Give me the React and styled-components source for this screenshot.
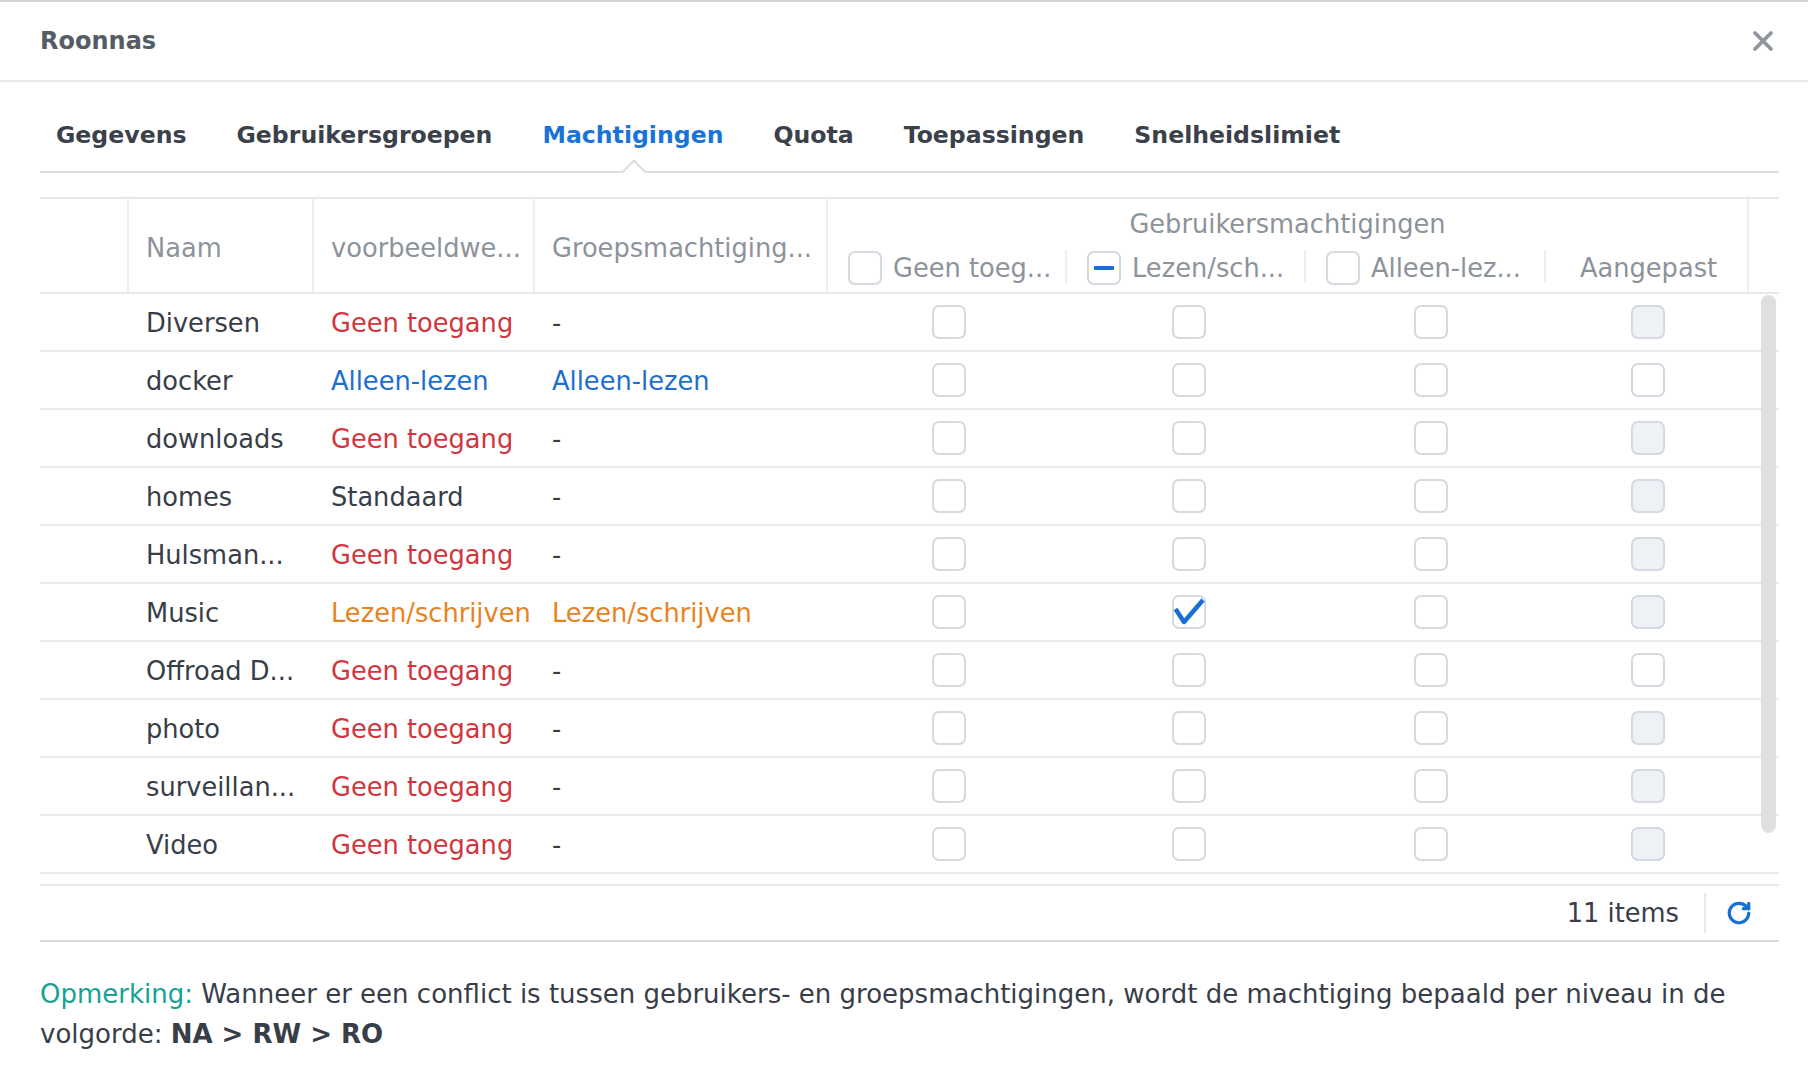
import React from 'react';
import styled, { createGlobalStyle } from 'styled-components';
import { RotateCw } from 'lucide-react';

const GlobalStyle = createGlobalStyle`
  * { box-sizing: border-box; }
  body {
    margin: 0;
    background: #fff;
    font-family: "DejaVu Sans", Verdana, sans-serif;
    color: #383e48;
  }
`

const COLS = '89px 185px 221px 293px 239px 239px 240px 201px 32px';

const TopEdge = styled.div`
  height: 2px;
  background: #d4d4d4;
`

const Header = styled.div`
  height: 80px;
  display: flex;
  align-items: center;
  justify-content: space-between;
  padding: 0 34px 0 40px;
  border-bottom: 2px solid #e6e9ec;
`

const Title = styled.div`
  font-size: 24px;
  font-weight: bold;
  color: #555c66;
`

const CloseButton = styled.div`
  width: 22px;
  height: 22px;
  display: flex;
`

const TabBar = styled.div`
  height: 91px;
  margin: 0 29px 0 40px;
  padding-left: 16px;
  display: flex;
  align-items: flex-end;
  gap: 50px;
  border-bottom: 2px solid #d9dee3;
`

const Tab = styled.div`
  position: relative;
  font-size: 23.6px;
  font-weight: bold;
  line-height: 30px;
  padding-bottom: 21px;
  color: ${props => props.active ? '#1b73d6' : '#3a414b'};
  &::after {
    content: '';
    display: ${props => props.active ? 'block' : 'none'};
    position: absolute;
    left: 50%;
    bottom: -10px;
    width: 16px;
    height: 16px;
    margin-left: -8px;
    background: #fff;
    border-top: 2px solid #d9dee3;
    border-left: 2px solid #d9dee3;
    transform: rotate(45deg);
  }
`

const Table = styled.div`
  margin: 24px 29px 0 40px;
  border-top: 2px solid #e6e9ec;
  font-size: 25.7px;
`

const HeadGrid = styled.div`
  display: grid;
  grid-template-columns: ${COLS};
  grid-template-rows: 46px 47px;
  border-bottom: 2px solid #e6e9ec;
  color: #8d939b;
`

const HeadCell = styled.div`
  grid-row: 1 / 3;
  display: flex;
  align-items: center;
  padding: 5px 0 0 17px;
  border-right: ${props => props.last ? 'none' : '2px solid #eceef1'};
  border-left: ${props => props.last ? '2px solid #eceef1' : 'none'};
  white-space: nowrap;
  overflow: hidden;
`

const GroupTitle = styled.div`
  grid-column: 5 / 9;
  grid-row: 1;
  display: flex;
  align-items: center;
  justify-content: center;
  padding-top: 4px;
`

const SubCell = styled.div`
  grid-row: 2;
  position: relative;
  display: flex;
  align-items: center;
  justify-content: ${props => props.center ? 'center' : 'flex-start'};
  padding: 0 16px 2px 20px;
  gap: 11px;
  white-space: nowrap;
  &::after {
    content: '';
    display: ${props => props.last ? 'none' : 'block'};
    position: absolute;
    right: 0;
    top: 5px;
    bottom: 9px;
    width: 2px;
    background: #eceef1;
  }
`

const Body = styled.div`
  position: relative;
`

const Row = styled.div`
  display: grid;
  grid-template-columns: ${COLS};
  height: 58px;
  border-bottom: 2px solid #e8ebee;
`

const Cell = styled.div`
  display: flex;
  align-items: center;
  justify-content: ${props => props.center ? 'center' : 'flex-start'};
  padding-left: ${props => props.center ? `${props.shift || 0}px` : '17px'};
  padding-top: ${props => props.center ? '0' : '2px'};
  white-space: nowrap;
  color: ${props => props.tone || '#383e48'};
`

const ScrollThumb = styled.div`
  position: absolute;
  right: 3px;
  top: 1px;
  width: 15px;
  height: 538px;
  border-radius: 8px;
  background: #dedfe0;
`

const Box = styled.span`
  position: relative;
  width: 34px;
  height: 34px;
  flex: none;
  border: 2px solid #d4dae0;
  border-radius: 7px;
  background: ${props => props.disabled ? '#eef2f6' : '#fff'};
  display: flex;
  align-items: center;
  justify-content: center;
  svg {
    position: absolute;
    left: -2px;
    top: -2px;
  }
`

const Minus = styled.span`
  width: 20px;
  height: 4px;
  border-radius: 1px;
  background: #1a6fd2;
`

const Footer = styled.div`
  margin-top: 10px;
  height: 58px;
  border-top: 2px solid #e6e9ec;
  border-bottom: 2px solid #d8dce0;
  display: flex;
  align-items: center;
  justify-content: flex-end;
  padding-right: 27px;
  color: #383e48;
`

const Divider = styled.span`
  width: 2px;
  height: 40px;
  background: #e6e9ec;
  margin: 0 20px 0 25px;
`

const Note = styled.p`
  margin: 32px 29px 0 40px;
  font-size: 26px;
  line-height: 40px;
  color: #383e48;
`

const Label = styled.span`
  color: #17a295;
`

const Checkbox = ({ checked, indeterminate, disabled }) => (
  <Box disabled={disabled}>
    {indeterminate && <Minus />}
    {checked && (
      <svg width="34" height="34" viewBox="0 0 34 34">
        <path d="M3.5 14 L12 27 L31 5" fill="none" stroke="#1a6fd2" strokeWidth="4.5" strokeLinejoin="round" />
      </svg>
    )}
  </Box>
)

const RED = '#d1353e';
const BLUE = '#1c6fd0';
const ORANGE = '#e7831f';

const rows = [
  { name: 'Diversen', access: 'Geen toegang', tone: RED, group: '-', custom: true },
  { name: 'docker', access: 'Alleen-lezen', tone: BLUE, group: 'Alleen-lezen', groupTone: BLUE, custom: false },
  { name: 'downloads', access: 'Geen toegang', tone: RED, group: '-', custom: true },
  { name: 'homes', access: 'Standaard', group: '-', custom: true },
  { name: 'Hulsman...', access: 'Geen toegang', tone: RED, group: '-', custom: true },
  { name: 'Music', access: 'Lezen/schrijven', tone: ORANGE, group: 'Lezen/schrijven', groupTone: ORANGE, custom: true, rw: true },
  { name: 'Offroad D...', access: 'Geen toegang', tone: RED, group: '-', custom: false },
  { name: 'photo', access: 'Geen toegang', tone: RED, group: '-', custom: true },
  { name: 'surveillan...', access: 'Geen toegang', tone: RED, group: '-', custom: true },
  { name: 'Video', access: 'Geen toegang', tone: RED, group: '-', custom: true },
]

const tabs = ['Gegevens', 'Gebruikersgroepen', 'Machtigingen', 'Quota', 'Toepassingen', 'Snelheidslimiet'];

export default function App() {
  return (
    <>
      <GlobalStyle />
      <TopEdge />
      <Header>
        <Title>Roonnas</Title>
        <CloseButton>
          <svg width="22" height="22" viewBox="0 0 22 22">
            <path d="M3 3 L19 19 M19 3 L3 19" stroke="#8f959c" strokeWidth="3.8" strokeLinecap="round" />
          </svg>
        </CloseButton>
      </Header>
      <TabBar>
        {tabs.map(t => <Tab key={t} active={t === 'Machtigingen'}>{t}</Tab>)}
      </TabBar>
      <Table>
        <HeadGrid>
          <HeadCell />
          <HeadCell>Naam</HeadCell>
          <HeadCell>voorbeeldwe...</HeadCell>
          <HeadCell>Groepsmachtiging...</HeadCell>
          <GroupTitle>Gebruikersmachtigingen</GroupTitle>
          <SubCell><Checkbox />Geen toeg...</SubCell>
          <SubCell><Checkbox indeterminate />Lezen/sch...</SubCell>
          <SubCell><Checkbox />Alleen-lez...</SubCell>
          <SubCell center last>Aangepast</SubCell>
          <HeadCell last />
        </HeadGrid>
        <Body>
          {rows.map(r => (
            <Row key={r.name}>
              <Cell />
              <Cell>{r.name}</Cell>
              <Cell tone={r.tone}>{r.access}</Cell>
              <Cell tone={r.groupTone}>{r.group}</Cell>
              <Cell center shift={2}><Checkbox /></Cell>
              <Cell center shift={5}><Checkbox checked={r.rw} /></Cell>
              <Cell center shift={9}><Checkbox /></Cell>
              <Cell center shift={2}><Checkbox disabled={r.custom} /></Cell>
              <Cell />
            </Row>
          ))}
          <ScrollThumb />
        </Body>
        <Footer>
          <span>11 items</span>
          <Divider />
          <RotateCw size={26} color="#1a6fd2" strokeWidth={3} />
        </Footer>
      </Table>
      <Note>
        <Label>Opmerking:</Label> Wanneer er een conflict is tussen gebruikers- en groepsmachtigingen, wordt de machtiging bepaald per niveau in de<br />
        volgorde: <b>NA &gt; RW &gt; RO</b>
      </Note>
    </>
  )
}
